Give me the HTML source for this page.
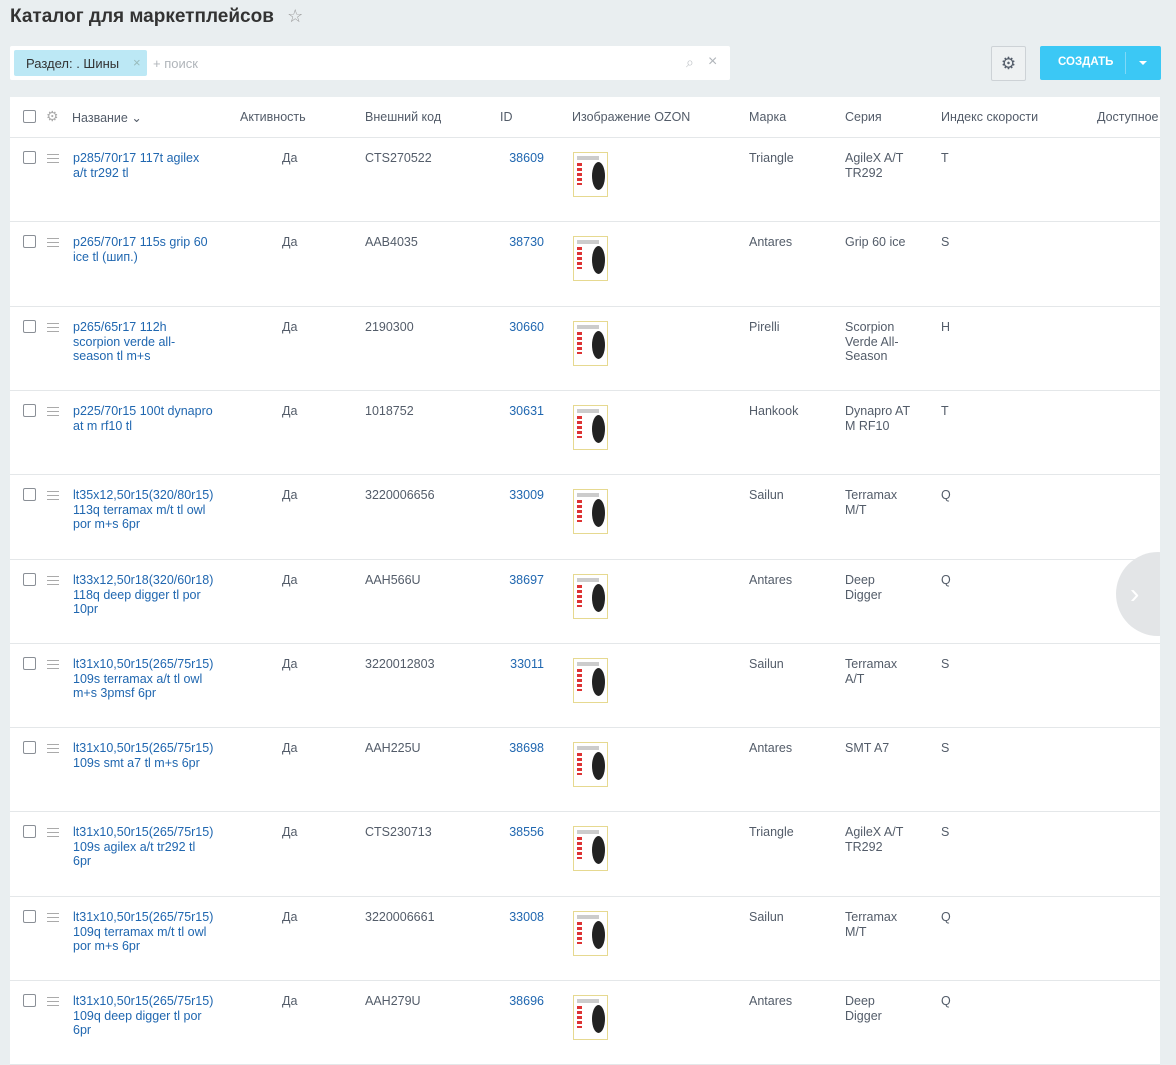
<!DOCTYPE html><html><head><meta charset="utf-8"><style>
body{margin:0;width:1176px;height:1052px;background:#e9eef0;font-family:"Liberation Sans",sans-serif;position:relative;overflow:hidden;font-size:12.5px;color:#535c69}
.a{position:absolute}
h1{position:absolute;left:10px;top:6px;margin:0;font-size:19px;font-weight:bold;color:#333}
.cb{position:absolute;width:11px;height:11px;border:1px solid #8a8f96;border-radius:2px;background:#fff}
.mn{position:absolute;width:12px;height:7px;border-top:1px solid #aaa;border-bottom:1px solid #aaa}
.mn:after{content:"";position:absolute;left:0;right:0;top:3px;border-top:1px solid #aaa}
.row{position:absolute;left:10px;width:1150px;box-sizing:border-box;border-bottom:1px solid #e4e7e9;background:#fff}
.nm{color:#2067b0;line-height:14.5px;width:140px}
.img{position:absolute;width:33px;height:43px;border:1px solid #e6d990;background:#fff}
</style></head><body>
<h1>Каталог для маркетплейсов <span style="color:#999;font-weight:normal;font-size:18px;margin-left:8px">☆</span></h1>
<div class="a" style="left:10px;top:46px;width:720px;height:34px;background:#fff;border-radius:2px"></div>
<div class="a" style="left:14px;top:50px;width:133px;height:26px;background:#bce8f5;border-radius:2px"></div>
<div class="a" style="left:26px;top:56px;font-size:13px;color:#333">Раздел: . Шины</div>
<div class="a" style="left:133px;top:55px;color:#9bb;font-size:13px">×</div>
<div class="a" style="left:153px;top:56px;color:#b0b5ba;font-size:13px">+ поиск</div>
<div class="a" style="left:686px;top:54px;color:#c0c4c8;font-size:14px">⌕</div>
<div class="a" style="left:708px;top:53px;color:#b0b5ba;font-size:16px">×</div>
<div class="a" style="left:991px;top:46px;width:33px;height:33px;border:1px solid #cdd2d6;background:#eef1f2;border-radius:2px;text-align:center;line-height:33px;color:#535c69;font-size:17px">⚙</div>
<div class="a" style="left:1040px;top:46px;width:121px;height:34px;background:#3bc8f5;border-radius:2px"></div>
<div class="a" style="left:1058px;top:56px;color:#fff;font-weight:bold;font-size:11.5px">СОЗДАТЬ</div>
<div class="a" style="left:1125px;top:52px;width:1px;height:22px;background:#7fd9f8"></div>
<div class="a" style="left:1139px;top:61px;border-left:4px solid transparent;border-right:4px solid transparent;border-top:4px solid #fff"></div>
<div class="a" style="left:10px;top:97px;width:1150px;height:41px;box-sizing:border-box;background:#fff;border-bottom:1px solid #e4e7e9"></div>
<div class="cb" style="left:23px;top:110px"></div>
<div class="a" style="left:46px;top:108px;color:#aaa;font-size:14px">⚙</div>
<div class="a" style="left:72px;top:110px;color:#535c69">Название ⌄</div>
<div class="a" style="left:240px;top:110px">Активность</div>
<div class="a" style="left:365px;top:110px">Внешний код</div>
<div class="a" style="left:500px;top:110px">ID</div>
<div class="a" style="left:572px;top:110px">Изображение OZON</div>
<div class="a" style="left:749px;top:110px">Марка</div>
<div class="a" style="left:845px;top:110px">Серия</div>
<div class="a" style="left:941px;top:110px">Индекс скорости</div>
<div class="a" style="left:1097px;top:110px">Доступное</div>
<div id="rows"></div>
<script>
var d=[["p285/70r17 117t agilex a/t tr292 tl","CTS270522","38609","Triangle","AgileX A/T TR292","T"],
["p265/70r17 115s grip 60 ice tl (шип.)","AAB4035","38730","Antares","Grip 60 ice","S"],
["p265/65r17 112h<br>scorpion verde all-season tl m+s","2190300","30660","Pirelli","Scorpion Verde All-Season","H"],
["p225/70r15 100t dynapro at m rf10 tl","1018752","30631","Hankook","Dynapro AT M RF10","T"],
["lt35x12,50r15(320/80r15) 113q terramax m/t tl owl por m+s 6pr","3220006656","33009","Sailun","Terramax M/T","Q"],
["lt33x12,50r18(320/60r18) 118q deep digger tl por 10pr","AAH566U","38697","Antares","Deep Digger","Q"],
["lt31x10,50r15(265/75r15) 109s terramax a/t tl owl m+s 3pmsf 6pr","3220012803","33011","Sailun","Terramax A/T","S"],
["lt31x10,50r15(265/75r15) 109s smt a7 tl m+s 6pr","AAH225U","38698","Antares","SMT A7","S"],
["lt31x10,50r15(265/75r15) 109s agilex a/t tr292 tl 6pr","CTS230713","38556","Triangle","AgileX A/T TR292","S"],
["lt31x10,50r15(265/75r15) 109q terramax m/t tl owl por m+s 6pr","3220006661","33008","Sailun","Terramax M/T","Q"],
["lt31x10,50r15(265/75r15) 109q deep digger tl por 6pr","AAH279U","38696","Antares","Deep Digger","Q"]];
var h="";d.forEach(function(r,i){var t=Math.round(138+i*84.3);var t2=Math.round(138+(i+1)*84.3);var y=t+13;
h+='<div class="row" style="top:'+t+'px;height:'+(t2-t)+'px"></div>'+
'<div class="cb" style="left:23px;top:'+(t+13)+'px"></div><div class="mn" style="left:47px;top:'+(t+16)+'px"></div>'+
'<div class="a nm" style="left:73px;top:'+y+'px">'+r[0]+'</div>'+
'<div class="a" style="left:282px;top:'+y+'px">Да</div>'+
'<div class="a" style="left:365px;top:'+y+'px">'+r[1]+'</div>'+
'<div class="a" style="left:494px;width:50px;text-align:right;top:'+y+'px;color:#2067b0">'+r[2]+'</div>'+
'<div class="img" style="left:573px;top:'+(t+14)+'px"><div class="a" style="left:3px;top:10px;width:5px;height:22px;background:repeating-linear-gradient(#d33 0 3px,#fff 3px 5px)"></div><div class="a" style="left:18px;top:9px;width:13px;height:28px;border-radius:50%;background:#222"></div><div class="a" style="left:3px;top:3px;width:22px;height:4px;background:#ccc"></div></div>'+
'<div class="a" style="left:749px;top:'+y+'px">'+r[3]+'</div>'+
'<div class="a" style="left:845px;top:'+y+'px;width:68px;line-height:14.5px">'+r[4]+'</div>'+
'<div class="a" style="left:941px;top:'+y+'px">'+r[5]+'</div>';});
document.getElementById("rows").innerHTML=h;
</script>
<div class="a" style="left:1116px;top:552px;width:84px;height:84px;border-radius:50%;background:#e3e5e7"></div>
<div class="a" style="left:1160px;top:97px;width:16px;height:955px;background:#e9eef0"></div>
<div class="a" style="left:1130px;top:578px;color:#fff;font-size:28px">›</div>
</body></html>
